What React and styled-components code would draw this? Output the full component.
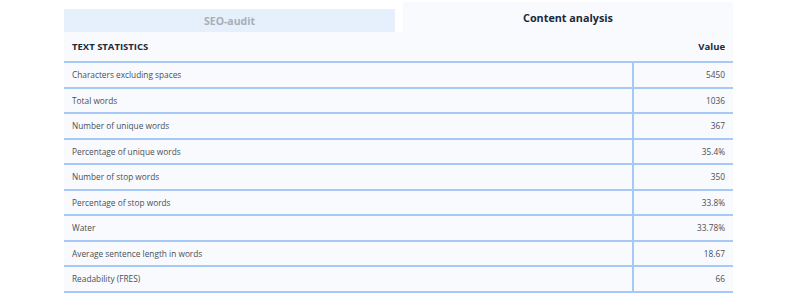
import React from "react";
import styled, { createGlobalStyle } from "styled-components";

const GlobalStyle = createGlobalStyle`
  body {
    margin: 0;
    background: #ffffff;
    font-family: "Open Sans", "Noto Sans", sans-serif;
  }
`;

const Page = styled.div`
  width: 669px;
  padding: 2px 0 0 64px;
`;

const Tabs = styled.div`
  display: flex;
  gap: 8px;
  align-items: flex-end;
`;

const Tab = styled.div`
  display: flex;
  align-items: center;
  justify-content: center;
  font-weight: 700;
  font-size: ${(p) => (p.active ? "10.8px" : "10.5px")};
  background: ${(p) => (p.active ? "#f8fafd" : "#e6effc")};
  color: ${(p) => (p.active ? "#1b2a3c" : "#a8aeb6")};
  height: ${(p) => (p.active ? "30px" : "23px")};
  width: ${(p) => (p.active ? "auto" : "331px")};
  flex: ${(p) => (p.active ? "1" : "none")};
`;

const Table = styled.table`
  width: 100%;
  border-collapse: collapse;
  background: #f8fafd;
`;

const HeadCell = styled.th`
  height: 29px;
  padding: 0 8px;
  font-size: 9.5px;
  font-weight: 700;
  color: #1b2a3c;
  text-align: ${(p) => (p.right ? "right" : "left")};
  border-bottom: 2px solid #a6c9f5;
`;

const Cell = styled.td`
  height: 23.5px;
  padding: 0 8px;
  font-size: 8.3px;
  color: #4a4f56;
  text-align: ${(p) => (p.right ? "right" : "left")};
  border-bottom: 2px solid #a6c9f5;
  border-left: ${(p) => (p.right ? "2px solid #a6c9f5" : "none")};
  width: ${(p) => (p.right ? "83px" : "auto")};
`;

const rows = [
  ["Characters excluding spaces", "5450"],
  ["Total words", "1036"],
  ["Number of unique words", "367"],
  ["Percentage of unique words", "35.4%"],
  ["Number of stop words", "350"],
  ["Percentage of stop words", "33.8%"],
  ["Water", "33.78%"],
  ["Average sentence length in words", "18.67"],
  ["Readability (FRES)", "66"],
];

export default function App() {
  return (
    <Page>
      <GlobalStyle />
      <Tabs>
        <Tab>SEO-audit</Tab>
        <Tab active>Content analysis</Tab>
      </Tabs>
      <Table>
        <thead>
          <tr>
            <HeadCell>TEXT STATISTICS</HeadCell>
            <HeadCell right>Value</HeadCell>
          </tr>
        </thead>
        <tbody>
          {rows.map(([label, value]) => (
            <tr key={label}>
              <Cell>{label}</Cell>
              <Cell right>{value}</Cell>
            </tr>
          ))}
        </tbody>
      </Table>
    </Page>
  );
}
